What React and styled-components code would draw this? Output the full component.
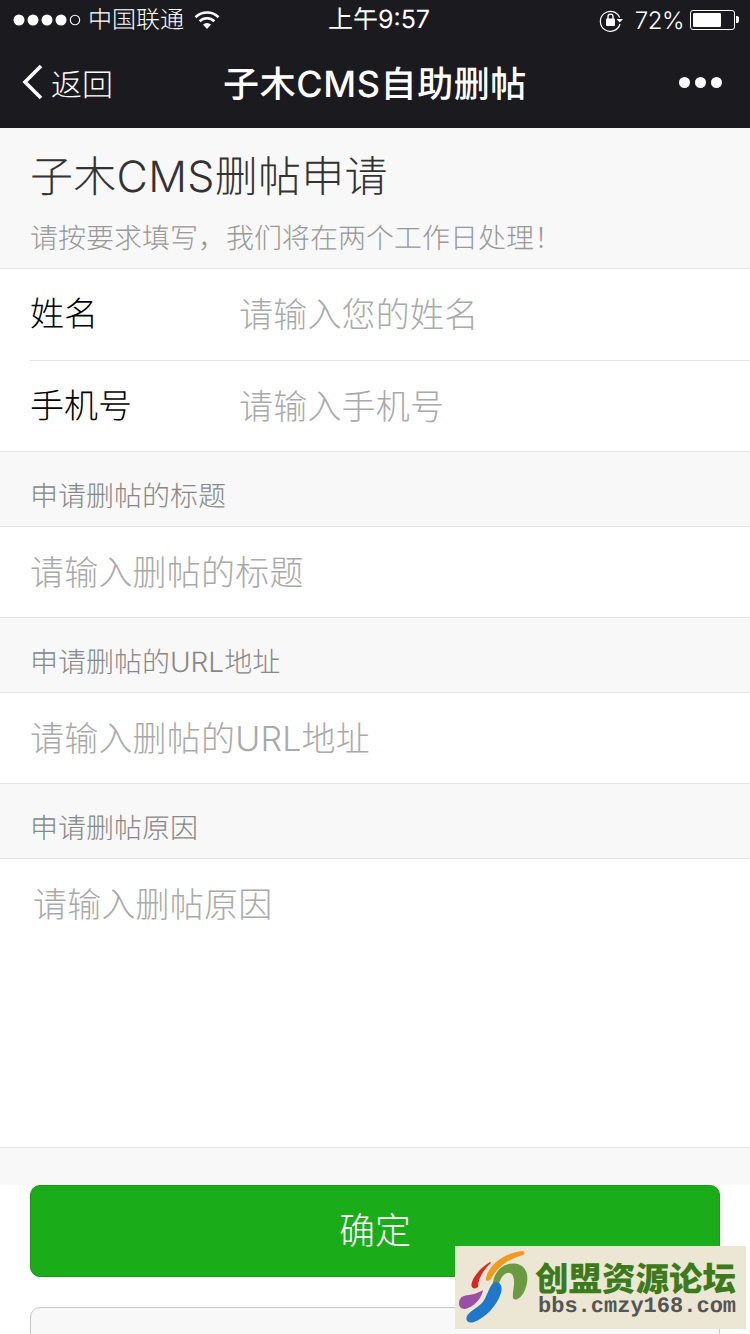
import React from "react";
import styled, { createGlobalStyle } from "styled-components";

const Global = createGlobalStyle`
  html, body { margin: 0; padding: 0; height: 1334px; overflow: hidden; background: #fff; }
  * { box-sizing: border-box; }
  body { font-family: Inter, "Noto Sans CJK SC", sans-serif; text-rendering: geometricPrecision; }
`;

const Page = styled.div`
  position: relative;
  width: 750px;
  height: 1334px;
  overflow: hidden;
  background: #fff;
`;

const StatusBar = styled.div`
  height: 40px;
  background: #1a1a1f;
  color: #fff;
  display: grid;
  grid-template-columns: 1fr auto 1fr;
  align-items: center;
  padding: 0 15px 0 13px;
  font-size: 24px;
  font-weight: 300;
`;
const StatusLeft = styled.div`
  display: flex;
  align-items: center;
`;
const StatusRight = styled.div`
  display: flex;
  align-items: center;
  justify-content: flex-end;
`;
const Carrier = styled.span`
  line-height: 40px;
  margin: 0 10px 0 7px;
`;
const Clock = styled.span`
  padding-left: 10px;
  font-size: 25px;
  font-weight: 400;
  line-height: 40px;
`;
const Percent = styled.span`
  font-size: 24px;
  letter-spacing: -0.5px;
  margin: 0 6px 0 12px;
`;
const Battery = styled.div`
  width: 45px;
  height: 20px;
  border: 1px solid #fff;
  border-radius: 3px;
  padding: 2px;
  position: relative;
  &::after {
    content: "";
    position: absolute;
    right: -5px;
    top: 5px;
    width: 3px;
    height: 7px;
    background: #fff;
    border-radius: 0 2px 2px 0;
  }
`;
const BatteryFill = styled.div`
  height: 100%;
  background: #fff;
  border-radius: 1px;
`;

const NavBar = styled.div`
  height: 88px;
  background: #1a1a1f;
  color: #fff;
  display: grid;
  grid-template-columns: 1fr auto 1fr;
  align-items: center;
  padding: 0 28px 4px 22px;
`;
const Back = styled.div`
  display: flex;
  align-items: center;
  gap: 7px;
  font-size: 31px;
  font-weight: 300;
`;
const NavTitle = styled.div`
  padding-left: 6px;
  font-size: 36px;
  font-weight: 500;
  letter-spacing: 0.6px;
`;
const More = styled.div`
  display: flex;
  justify-content: flex-end;
  gap: 5px;
`;
const Dot = styled.span`
  width: 11px;
  height: 11px;
  border-radius: 50%;
  background: #fff;
`;

const Header = styled.div`
  height: 141px;
  background: #f8f8f8;
  padding: 21px 30px 0;
  border-bottom: 1px solid #e4e4e4;
`;
const Title = styled.h1`
  margin: 0;
  font-size: 43px;
  font-weight: 300;
  letter-spacing: 0.3px;
  line-height: 56px;
  color: #333;
`;
const Subtitle = styled.p`
  margin: 15px 0 0;
  font-size: 28px;
  font-weight: 300;
  line-height: 36px;
  color: #999;
`;

const Group = styled.div`
  background: #fff;
  border-bottom: 1px solid #e4e4e4;
`;
const Row = styled.label`
  height: ${(p) => p.$h || 91}px;
  margin-left: 30px;
  display: flex;
  align-items: center;
  border-bottom: ${(p) => (p.$divider ? "1px solid #e4e4e4" : "none")};
`;
const RowLabel = styled.span`
  width: 209px;
  padding-bottom: 6px;
  font-size: 34px;
  font-weight: 300;
  color: #000;
`;
const Input = styled.input`
  flex: 1;
  min-width: 0;
  border: 0;
  outline: 0;
  padding: 0;
  height: 50px;
  background: transparent;
  font-family: inherit;
  font-size: 34px;
  font-weight: 300;
  letter-spacing: 0.2px;
  &::placeholder { color: #aaa; opacity: 1; }
`;
const Section = styled.div`
  height: 75px;
  background: #f8f8f8;
  border-bottom: 1px solid #e4e4e4;
  padding: 26px 30px 0;
  font-size: 28px;
  font-weight: 300;
  line-height: 36px;
  color: #888;
`;
const TextArea = styled.textarea`
  display: block;
  width: 100%;
  height: 288px;
  border: 0;
  outline: 0;
  resize: none;
  padding: 22px 33px;
  font-family: inherit;
  font-size: 34px;
  font-weight: 300;
  letter-spacing: 0.2px;
  line-height: 48px;
  &::placeholder { color: #aaa; opacity: 1; }
`;
const Spacer = styled.div`
  height: 38px;
  background: #f8f8f8;
  border-top: 1px solid #e4e4e4;
`;
const Actions = styled.div`
  padding: 0 30px;
  display: flex;
  flex-direction: column;
  gap: 30px;
`;
const Primary = styled.button`
  height: 92px;
  flex: none;
  border: 1px solid #179b16;
  border-radius: 10px;
  background: #1aad19;
  color: #fff;
  font-family: inherit;
  font-size: 36px;
  font-weight: 300;
  padding: 0 0 6px;
`;
const Secondary = styled.button`
  height: 92px;
  flex: none;
  border: 1px solid #c8c8c8;
  border-radius: 10px;
  background: #f8f8f8;
  padding: 0;
`;

const Logo = styled.div`
  position: absolute;
  left: 455px;
  top: 1246px;
  width: 291px;
  height: 83px;
  background: #ece7d4;
  display: flex;
  align-items: center;
`;
const LogoText = styled.div`
  margin: 5px 0 0 2px;
  display: flex;
  flex-direction: column;
  align-items: flex-start;
`;
const LogoName = styled.div`
  font-size: 33.5px;
  font-weight: 900;
  line-height: 34px;
  color: #3c7a1c;
  white-space: nowrap;
`;
const LogoUrl = styled.div`
  margin-left: 3px;
  font-family: "Liberation Mono", monospace;
  font-size: 22px;
  font-weight: 700;
  line-height: 20px;
  color: #555;
`;

const Signal = () => (
  <svg width="68" height="14" viewBox="0 0 68 14">
    {[6, 20, 34, 48].map((x) => <circle key={x} cx={x} cy="7" r="5.5" fill="#fff" />)}
    <circle cx="62" cy="7" r="4.7" fill="none" stroke="#fff" strokeWidth="1.1" />
  </svg>
);
const Wifi = () => (
  <svg width="26" height="20" viewBox="0 0 26 20" fill="none" stroke="#fff" strokeWidth="2.6">
    <path d="M1.5 7.2a16.5 16.5 0 0 1 23 0" />
    <path d="M5.6 11.2a10.6 10.6 0 0 1 14.8 0" />
    <path d="M13 19l-4-4.4a5.7 5.7 0 0 1 8 0z" fill="#fff" stroke="none" />
  </svg>
);
const RotationLock = () => (
  <svg width="24" height="24" viewBox="0 0 24 24" fill="none">
    <path d="M20.6 9.5A10 10 0 1 0 21 16" stroke="#fff" strokeWidth="1.2" />
    <path d="M17.5 11h6.5l-3.2 3.6z" fill="#fff" />
    <rect x="7" y="10.5" width="9" height="7.5" rx="1" fill="#fff" />
    <path d="M9 11V8.6a2.5 2.5 0 0 1 5 0V11" stroke="#fff" strokeWidth="1.4" />
  </svg>
);
const Chevron = () => (
  <svg width="22" height="36" viewBox="0 0 22 36" fill="none">
    <path d="M19 2L3 18l16 16" stroke="#fff" strokeWidth="3.6" />
  </svg>
);
const LogoMark = () => (
  <svg width="78" height="83" viewBox="0 0 78 83" style={{ flex: "none", filter: "blur(0.4px)" }}>
    <path d="M31 32C34 18 50 7 67 5c3 0 3 3 1 4C54 13 43 20 36 33c-2 3-6 2-5-1z" fill="#f09a1e" />
    <path d="M35 16C30 19 20 27 17 36c-2 6 2 8 6 5 0-8 5-17 13-24z" fill="#d8281f" />
    <path d="M38 36C40 22 54 14 65 19c9 4 9 17 4 27-3 6-9 10-11 6-1-7 3-14 0-22-3-6-10-3-13 5-2 5-8 5-7 1z" fill="#6a9a42" />
    <path d="M4 57C5 48 12 50 19 48c4-1 7-3 9-4-1 7-7 15-15 18-4 2-9 1-9-5z" fill="#9a4fa6" />
    <path d="M38 37c7-3 10 3 8 10-4 13-16 25-27 29-6 2-9-2-7-6 3-5 10-8 15-13 5-6 6-14 11-20z" fill="#1f78c8" />
  </svg>
);

export default function App() {
  return (
    <Page>
      <Global />
      <StatusBar>
        <StatusLeft>
          <Signal />
          <Carrier>中国联通</Carrier>
          <Wifi />
        </StatusLeft>
        <Clock>上午9:57</Clock>
        <StatusRight>
          <RotationLock />
          <Percent>72%</Percent>
          <Battery><BatteryFill style={{ width: "72%" }} /></Battery>
        </StatusRight>
      </StatusBar>
      <NavBar>
        <Back><Chevron />返回</Back>
        <NavTitle>子木CMS自助删帖</NavTitle>
        <More><Dot /><Dot /><Dot /></More>
      </NavBar>
      <Header>
        <Title>子木CMS删帖申请</Title>
        <Subtitle>请按要求填写，我们将在两个工作日处理！</Subtitle>
      </Header>
      <Group>
        <Row $divider $h={92}>
          <RowLabel>姓名</RowLabel>
          <Input placeholder="请输入您的姓名" />
        </Row>
        <Row $h={90}>
          <RowLabel>手机号</RowLabel>
          <Input placeholder="请输入手机号" />
        </Row>
      </Group>
      <Section>申请删帖的标题</Section>
      <Group><Row $h={90}><Input placeholder="请输入删帖的标题" /></Row></Group>
      <Section>申请删帖的URL地址</Section>
      <Group><Row $h={90}><Input placeholder="请输入删帖的URL地址" /></Row></Group>
      <Section>申请删帖原因</Section>
      <TextArea placeholder="请输入删帖原因" />
      <Spacer />
      <Actions>
        <Primary>确定</Primary>
        <Secondary aria-label="取消" />
      </Actions>
      <Logo>
        <LogoMark />
        <LogoText>
          <LogoName>创盟资源论坛</LogoName>
          <LogoUrl>bbs.cmzy168.com</LogoUrl>
        </LogoText>
      </Logo>
    </Page>
  );
}
